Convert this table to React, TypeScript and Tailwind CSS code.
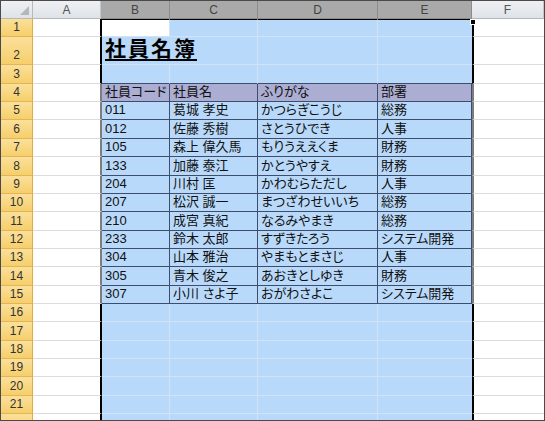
import React from "react";

interface Person {
  code: string;
  name: string;
  kana: string;
  dept: string;
}

const people: Person[] = [
  { code: "011", name: "葛城 孝史", kana: "かつらぎこうじ", dept: "総務" },
  { code: "012", name: "佐藤 秀樹", kana: "さとうひでき", dept: "人事" },
  { code: "105", name: "森上 偉久馬", kana: "もりうええくま", dept: "財務" },
  { code: "133", name: "加藤 泰江", kana: "かとうやすえ", dept: "財務" },
  { code: "204", name: "川村 匡", kana: "かわむらただし", dept: "人事" },
  { code: "207", name: "松沢 誠一", kana: "まつざわせいいち", dept: "総務" },
  { code: "210", name: "成宮 真紀", kana: "なるみやまき", dept: "総務" },
  { code: "233", name: "鈴木 太郎", kana: "すずきたろう", dept: "システム開発" },
  { code: "304", name: "山本 雅治", kana: "やまもとまさじ", dept: "人事" },
  { code: "305", name: "青木 俊之", kana: "あおきとしゆき", dept: "財務" },
  { code: "307", name: "小川 さよ子", kana: "おがわさよこ", dept: "システム開発" },
];

const headers = ["社員コード", "社員名", "ふりがな", "部署"];
// widths of B..E
const colW = ["w-[68px]", "w-[88px]", "w-[120px]", "w-[94px]"];

const font = "font-['Liberation_Sans','Noto_Sans_CJK_JP',sans-serif] [font-feature-settings:'palt']";

function ColHeader({ label, selected, className }: { label: string; selected: boolean; className: string }) {
  return (
    <div
      className={`${className} h-full flex items-center justify-center text-[12px] border-r border-b ${
        selected
          ? "bg-[#a9a9a9] text-[#444] border-r-[#8c8c8c] border-b-[#8c8c8c]"
          : "bg-gradient-to-b from-[#eef0f3] to-[#dfe3e8] text-[#555] border-r-[#c3c7cc] border-b-[#b5b9be]"
      }`}
    >
      {label}
    </div>
  );
}

function SheetRow({ r }: { r: number }) {
  const inTable = r >= 4 && r <= 15;
  const person = r >= 5 && r <= 15 ? people[r - 5] : null;
  const height = r === 2 ? "h-[28px]" : "h-[18.36px]";
  const edge = inTable ? "border-[#7d7d7d]" : "border-black";
  const cells: string[] = r === 4 ? headers : person ? [person.code, person.name, person.kana, person.dept] : ["", "", "", ""];

  return (
    <div className={`flex ${height} shrink-0`}>
      <div className="w-[32px] shrink-0 flex items-end justify-center pb-[1px] text-[12px] leading-[15px] text-[#333] bg-gradient-to-b from-[#fbe09a] to-[#f6cf6a] border-r border-r-[#e2ab3f] border-b border-b-[#e3b458]">
        {r <= 21 ? r : ""}
      </div>
      <div className={`w-[69px] shrink-0 bg-white border-b border-b-[#dcdcdc] border-r-2 ${edge}`} />
      {colW.map((w, i) => {
        let cls = "";
        if (inTable) {
          cls = `border-b border-r border-[#3e4d6b] ${r === 4 ? "bg-[#abadd3]" : "bg-[#b9d9fa]"}`;
        } else {
          const bg = r === 1 && i === 0 ? "bg-white" : "bg-[#b9d9fa]";
          const bottom = r === 3 ? "border-b-[#3e4d6b]" : "border-b-[#d3e3f5]";
          const right = r === 2 && i === 0 ? "" : i === 3 ? "" : "border-r border-r-[#d3e3f5]";
          const top = r === 1 ? "border-t border-t-black" : "";
          cls = `${bg} border-b ${bottom} ${right} ${top}`;
        }
        return (
          <div key={i} className={`${w} shrink-0 flex items-end pl-[3px] pb-[1px] text-[13px] leading-[16px] text-[#111] whitespace-nowrap ${cls}`}>
            {r === 2 && i === 0 ? (
              <span className="relative z-10 text-[21px] leading-[24px] font-bold tracking-[2px] underline underline-offset-[3px] decoration-[1.5px] text-black pb-[2px]">
                社員名簿
              </span>
            ) : (
              cells[i]
            )}
          </div>
        );
      })}
      <div className={`flex-1 bg-white border-b border-b-[#dcdcdc] border-l-2 ${edge}`} />
    </div>
  );
}

export default function App() {
  const rows = Array.from({ length: 22 }, (_, i) => i + 1);

  return (
    <div className={`relative w-[545px] h-[421px] overflow-hidden border border-[#4a4a4a] bg-white flex flex-col ${font}`}>
      <div className="flex h-[18px] shrink-0">
        <div className="w-[32px] shrink-0 h-full relative bg-gradient-to-b from-[#eef0f3] to-[#dfe3e8] border-r border-b border-[#b5b9be]">
          <svg className="absolute right-[3px] bottom-[3px]" width="9" height="9" viewBox="0 0 9 9">
            <polygon points="9,0 9,9 0,9" fill="#b4b8bd" />
          </svg>
        </div>
        <ColHeader label="A" selected={false} className="w-[68px] shrink-0" />
        <ColHeader label="B" selected className="w-[69px] shrink-0" />
        <ColHeader label="C" selected className="w-[88px] shrink-0" />
        <ColHeader label="D" selected className="w-[120px] shrink-0" />
        <ColHeader label="E" selected className="w-[94px] shrink-0" />
        <ColHeader label="F" selected={false} className="flex-1" />
      </div>
      {rows.map((r) => (
        <SheetRow key={r} r={r} />
      ))}
      {/* fill handle */}
      <div className="absolute left-[469px] top-[18px] w-[6px] h-[6px] bg-black border border-white" />
    </div>
  );
}
